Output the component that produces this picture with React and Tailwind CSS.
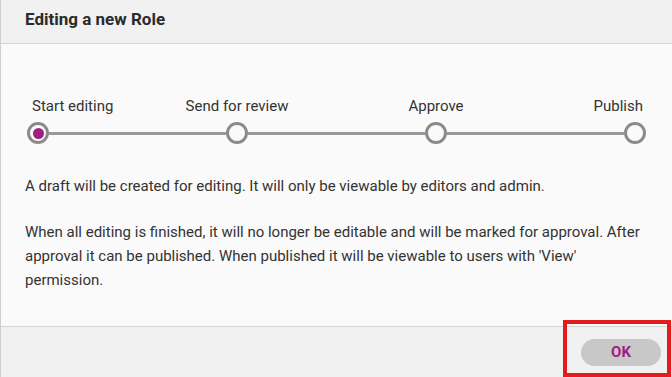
import React from 'react';

const steps = ['Start editing', 'Send for review', 'Approve', 'Publish'];

const Circle = ({ active }) => (
    <div className="w-[22px] h-[22px] shrink-0 rounded-full border-[3px] border-[#8a8a8a] bg-[#fafafa] flex items-center justify-center">
        {active && <div className="w-[11px] h-[11px] rounded-full bg-[#9e1f7f]" />}
    </div>
);

const App = () => {
    return (
        <div className="relative w-[672px] h-[377px] flex flex-col border-l border-[#cfcfcf] bg-[#fafafa] text-[#333] font-['Roboto',sans-serif]">
            {/* Header */}
            <div className="h-[44px] shrink-0 flex items-center pl-[24px] pb-[4px] bg-[#f1f1f1] border-b border-[#d4d4d4]">
                <h2 className="text-[17px] font-bold text-[#2b2b2b]">Editing a new Role</h2>
            </div>

            {/* Body */}
            <div className="flex-1 px-[24px] pt-[52px]">
                <div className="mx-[2px]">
                    <div className="flex h-[20px] text-[15px] leading-[20px] text-[#333]">
                        {steps.map((s, i) => (
                            <React.Fragment key={s}>
                                <div className={`w-[22px] shrink-0 flex whitespace-nowrap ${i === 0 ? 'justify-start pl-[5px]' : i === steps.length - 1 ? 'justify-end pr-[3px]' : 'justify-center'}`}>
                                    {s}
                                </div>
                                {i < steps.length - 1 && <div className="flex-1" />}
                            </React.Fragment>
                        ))}
                    </div>
                    <div className="flex items-center mt-[6px]">
                        {steps.map((s, i) => (
                            <React.Fragment key={s}>
                                <Circle active={i === 0} />
                                {i < steps.length - 1 && <div className="flex-1 h-[3px] bg-[#999]" />}
                            </React.Fragment>
                        ))}
                    </div>
                </div>

                <p className="mt-[30px] text-[15px] leading-[24px]">
                    A draft will be created for editing. It will only be viewable by editors and admin.
                </p>
                <p className="mt-[22px] text-[15px] leading-[24px]">
                    When all editing is finished, it will no longer be editable and will be marked for approval. After approval it can be published. When published it will be viewable to users with 'View' permission.
                </p>
            </div>

            {/* Footer */}
            <div className="h-[51px] shrink-0 flex items-center justify-end pr-[11px] bg-[#f1f1f1] border-t border-[#d4d4d4]">
                <button className="w-[80px] h-[27px] rounded-full bg-[#c8c8c8] text-[#9e1f7f] text-[15px] font-bold">
                    OK
                </button>
            </div>

            {/* highlight annotation */}
            <div className="absolute left-[562px] top-[320px] w-[108px] h-[57px] border-[4px] border-[#e31b1b] pointer-events-none" />
        </div>
    );
};

export default App;
